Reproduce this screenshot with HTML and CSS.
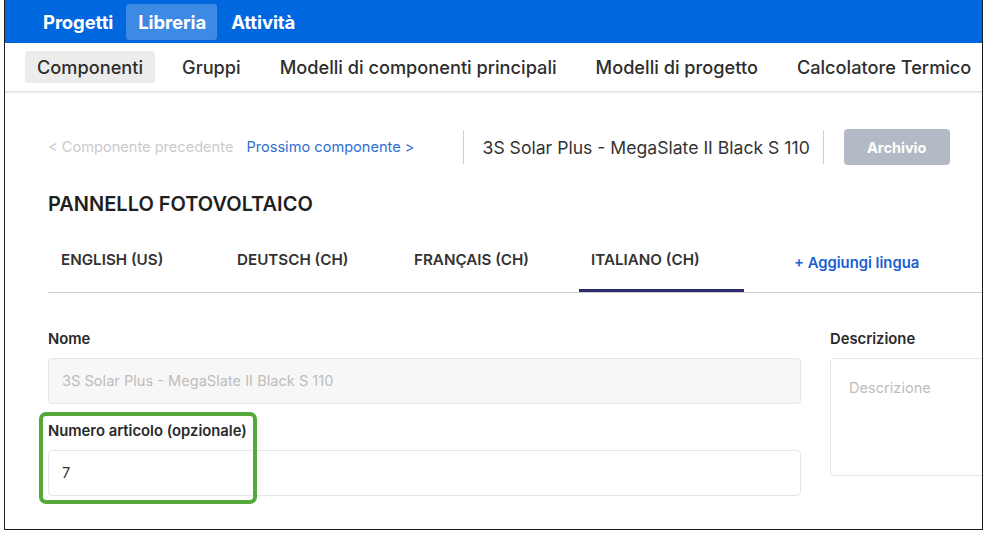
FILE: index.html
```html
<!DOCTYPE html>
<html lang="it">
<head>
<meta charset="utf-8">
<title>Componenti</title>
<link rel="stylesheet" href="styles.css">
</head>
<body>
<div class="frame">
  <header class="topbar">
    <a class="top-item">Progetti</a>
    <a class="top-item active">Libreria</a>
    <a class="top-item">Attività</a>
  </header>
  <nav class="subnav">
    <a class="sub-item active">Componenti</a>
    <a class="sub-item">Gruppi</a>
    <a class="sub-item">Modelli di componenti principali</a>
    <a class="sub-item">Modelli di progetto</a>
    <a class="sub-item">Calcolatore Termico</a>
  </nav>
  <main class="content">
    <div class="pager">
      <span class="prev">&lt; Componente precedente</span>
      <span class="next">Prossimo componente &gt;</span>
      <span class="divider"></span>
      <span class="comp-name">3S Solar Plus - MegaSlate II Black S 110</span>
      <span class="divider"></span>
      <button class="archive">Archivio</button>
    </div>
    <h1 class="title">PANNELLO FOTOVOLTAICO</h1>
    <div class="tabs">
      <div class="tab">ENGLISH (US)</div>
      <div class="tab">DEUTSCH (CH)</div>
      <div class="tab">FRANÇAIS (CH)</div>
      <div class="tab active">ITALIANO (CH)</div>
      <div class="add-lang">+ Aggiungi lingua</div>
    </div>
    <div class="form">
      <div class="col-main">
        <label class="label">Nome</label>
        <div class="input disabled">3S Solar Plus - MegaSlate II Black S 110</div>
        <div class="field-art">
          <label class="label">Numero articolo (opzionale)</label>
          <div class="input">7</div>
          <div class="highlight"></div>
        </div>
      </div>
      <div class="col-side">
        <label class="label">Descrizione</label>
        <div class="textarea">Descrizione</div>
      </div>
    </div>
  </main>
</div>
</body>
</html>
```

FILE: styles.css
```css
* { box-sizing: border-box; }
html, body { margin: 0; padding: 0; background: #fff; }
body {
  font-family: Inter, "Noto Sans", sans-serif;
  color: #333;
}
.frame {
  width: 979px;
  height: 530px;
  margin-left: 4px;
  border: 1px solid #1c1c1c;
  border-top: 0;
  overflow: hidden;
  background: #fff;
}
.topbar {
  height: 43px;
  background: #0067df;
  display: flex;
  align-items: center;
  gap: 2px;
  padding-left: 26px;
}
.top-item {
  color: #fff;
  font-weight: 700;
  font-size: 18.5px;
  padding: 0 11px 0 12px;
  height: 36px;
  line-height: 36px;
  border-radius: 3px;
  letter-spacing: -0.1px;
}
.top-item.active { background: #3d8ae4; }
.subnav {
  height: 49px;
  display: flex;
  align-items: center;
  gap: 15px;
  padding-left: 20px;
  border-bottom: 1px solid #dedede;
  box-shadow: 0 1px 2px rgba(0,0,0,0.08);
}
.sub-item {
  font-size: 18.2px;
  font-weight: 500;
  color: #2e2e2e;
  padding: 0 12px;
  height: 32px;
  line-height: 32px;
  border-radius: 3px;
  white-space: nowrap;
}
.sub-item.active { background: #ececec; }
.content {
  padding: 37px 0 0 43px;
}
.pager {
  display: flex;
  align-items: center;
  height: 36px;
  font-size: 14.6px;
}
.prev { color: #cbcbcb; white-space: nowrap; }
.next { color: #2f6fcf; margin-left: 13px; white-space: nowrap; }
.divider {
  width: 1px;
  height: 34px;
  background: #cfcfcf;
  margin: 0 19px 0 48px;
}
.comp-name + .divider { margin: 0 20px 0 13px; }
.comp-name { font-size: 17.6px; color: #333; white-space: nowrap; }
.archive {
  font-family: inherit;
  background: #b3bac6;
  color: #fff;
  font-weight: 700;
  font-size: 14.5px;
  border: 0;
  border-radius: 4px;
  width: 106px;
  height: 36px;
  flex-shrink: 0;
}
.title {
  margin: 27px 0 0;
  font-size: 20px;
  font-weight: 600;
  color: #1f1f1f;
  line-height: 24px;
}
.tabs {
  margin-top: 20px;
  display: flex;
  align-items: flex-end;
  border-bottom: 1px solid #cfcfcf;
  height: 57px;
}
.tab {
  width: 165px;
  flex-shrink: 0;
  margin-right: 12px;
  padding: 0 12px;
  height: 57px;
  line-height: 50px;
  font-size: 15.2px;
  font-weight: 600;
  color: #333;
  white-space: nowrap;
}
.tab:first-child { padding-left: 13px; }
.tab.active { border-bottom: 3px solid #2c2c6c; }
.add-lang {
  margin-left: 38px;
  height: 57px;
  line-height: 56px;
  font-size: 14.8px;
  font-weight: 600;
  color: #1a5fd1;
  white-space: nowrap;
}
.form {
  margin-top: 37px;
  display: flex;
  gap: 29px;
}
.col-main { width: 753px; flex-shrink: 0; }
.col-side { width: 300px; flex-shrink: 0; }
.label {
  display: block;
  font-size: 14.8px;
  font-weight: 600;
  color: #2a2a2a;
  line-height: 18px;
  margin-bottom: 10px;
}
.input {
  height: 46px;
  border: 1px solid #e6e6e6;
  border-radius: 4px;
  padding: 0 13px;
  line-height: 44px;
  font-size: 14.6px;
  color: #333;
}
.input.disabled { background: #f7f7f7; color: #bdbdbd; }
.field-art { position: relative; margin-top: 18px; }
.highlight {
  position: absolute;
  left: -9px;
  top: -10px;
  width: 218px;
  height: 92px;
  border: 4px solid #55a83a;
  border-radius: 7px;
}
.textarea {
  height: 118px;
  border: 1px solid #e6e6e6;
  border-radius: 4px;
  padding: 20px 18px;
  font-size: 14.6px;
  color: #bdbdbd;
}
```
